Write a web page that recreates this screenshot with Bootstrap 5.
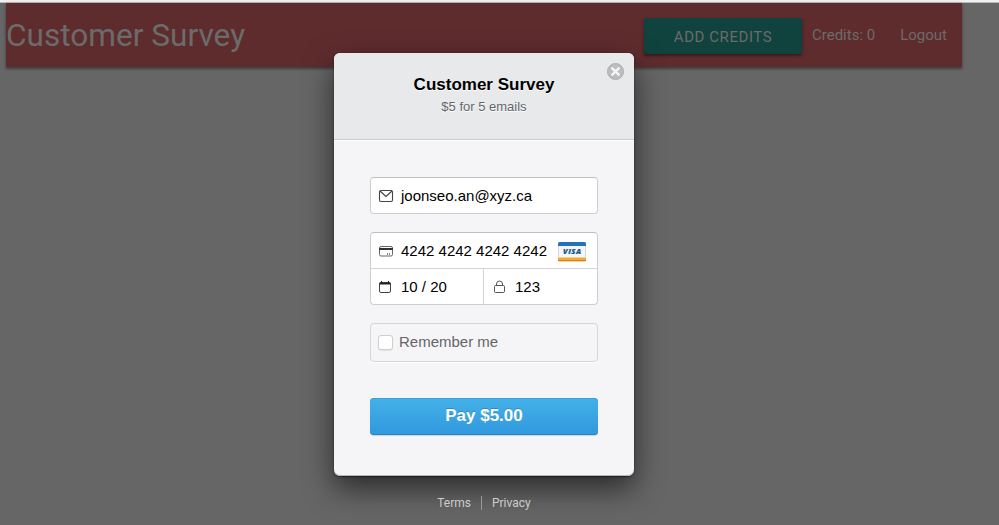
<!DOCTYPE html>
<html lang="en">
<head>
<meta charset="utf-8">
<title>Customer Survey</title>
<link href="https://cdn.jsdelivr.net/npm/bootstrap@5.3.0/dist/css/bootstrap.min.css" rel="stylesheet">
<style>
body{background:#666;height:525px;overflow:hidden;font-family:Roboto,sans-serif;color:#6b6b6b}
.topline{height:3px;background:#f1f1f3;border-bottom:1px solid #b9b9bb}
.appbar{width:956px;height:64px;margin-left:6px;background:#5f2c2e;box-shadow:0 2px 2px rgba(0,0,0,.28),0 1px 4px rgba(0,0,0,.22)}
.brand{font-size:31.6px;line-height:65px;white-space:nowrap}
.add-btn{width:158px;height:36px;margin-top:1px;border-radius:2px;background:#10433e;color:#6b6b6b;font-size:15px;letter-spacing:.56px;box-shadow:0 2px 2px rgba(0,0,0,.28),0 1px 4px rgba(0,0,0,.22);padding:1px 0 0;line-height:36px;border:0}
.links{font-size:15px;white-space:nowrap}
.credits{margin-left:10px}
.logout{margin:0 15px 0 25px}
.overlay{left:0;top:0;width:968px;padding-top:53px;font-family:"Liberation Sans",Arial,sans-serif}
.dialog-box{width:300px;height:423px;border-radius:6px;background:#f5f5f7;box-shadow:inset 0 -1px 0 #b4b4b6,0 12px 30px rgba(0,0,0,.6),0 1px 2px rgba(0,0,0,.5)}
.dialog-head{height:87px;background:#e8e9eb;border-bottom:1px solid #cbccce;border-radius:6px 6px 0 0;box-shadow:0 1px 0 #fff;padding-top:21px}
.dialog-head h1{font-size:17px;line-height:21px;font-weight:700;color:#000;margin:0;text-shadow:0 1px 0 #fff}
.dialog-head p{font-size:13px;line-height:20px;color:#62656a;margin:2px 0 0;text-shadow:0 1px 0 #fff}
.close-x{right:10px;top:10px;width:17px;height:17px}
.dialog-form{padding:37px 36px 0}
.field{background:#fff;border:1px solid #cfcfd2;border-top-color:#c0c0c3;border-radius:4px;color:#000;font-size:15px}
.field svg{width:16px;height:16px;flex:none;margin-top:1px}
.field span{padding-top:2px}
.card-fields{margin-top:18px}
.field svg.visa{width:28px;height:20px;margin-top:2px;margin-left:4px}
.cell{height:35px;padding-left:7px;gap:7px;white-space:nowrap}
.cell-date{width:112px}
.split-top{border-top:1px solid #d4d4d7}
.split-left{border-left:1px solid #d4d4d7;padding-left:8px}
.remember{height:39px;border:1px solid #d4d5d8;border-radius:4px;box-shadow:0 1px 0 #fff;padding-left:7px;gap:6px;font-size:15px;color:#666;margin-top:18px}
.tick{width:15px;height:15px;margin-bottom:1px;background:#fff;border:1px solid #cdced1;border-radius:3px;box-shadow:0 1px 1px rgba(0,0,0,.08)}
.pay{height:37px;margin-top:36px;border:0;border-radius:4px;background:linear-gradient(#44b1e8,#3098de);color:#fff;font-size:17px;font-weight:700;line-height:35px;padding:0 0 2px;text-shadow:0 -1px 0 rgba(0,0,0,.2);box-shadow:inset 0 1px 0 #3ba2d8,inset 0 -1px 0 #2a83c5,0 1px 1px rgba(0,0,0,.15)}
.foot{font-family:Roboto,sans-serif;font-size:12px;line-height:14px;color:#ccc;margin-top:20px}
.foot span+span{border-left:1px solid #999;margin-left:10px;padding-left:10px}
</style>
</head>
<body>
<div class="topline"></div>
<nav class="appbar d-flex justify-content-between">
  <div class="brand">Customer Survey</div>
  <div class="links d-flex align-items-center">
    <button class="btn add-btn">ADD CREDITS</button>
    <span class="credits">Credits: 0</span>
    <span class="logout">Logout</span>
  </div>
</nav>
<div class="overlay position-absolute d-flex flex-column align-items-center">
  <div class="dialog-box">
    <div class="dialog-head text-center position-relative">
      <h1>Customer Survey</h1>
      <p>$5 for 5 emails</p>
      <svg class="close-x position-absolute" viewBox="0 0 17 17"><circle cx="8.5" cy="8.5" r="8" fill="#bcbdbf" stroke="#adaeb0"/><path d="M5.3 5.3l6.400 6.400M11.700 5.300l-6.400 6.400" stroke="#f6f6f7" stroke-width="2.4" stroke-linecap="round"/></svg>
    </div>
    <div class="dialog-form">
      <div class="field">
        <div class="cell d-flex align-items-center">
          <svg viewBox="0 0 16 16" fill="none" stroke="#444"><rect x="1.5" y="2.5" width="13" height="11" rx="1.5" stroke-width="1.1"/><path d="M2 3l6 5.500L14 3" stroke-width="1.200"/></svg>
          <span>joonseo.an@xyz.ca</span>
        </div>
      </div>
      <div class="field card-fields">
        <div class="cell d-flex align-items-center">
          <svg viewBox="0 0 16 16" fill="none" stroke="#666"><rect x="1.5" y="3.5" width="13" height="9.500" rx="1.5"/><path d="M1 6h14" stroke="#333" stroke-width="2"/><path d="M9.5 10v2M11.500 10v2" stroke="#888"/></svg>
          <span>4242 4242 4242 4242</span>
          <svg class="visa" viewBox="0 0 28 20"><rect width="28" height="20" rx="1.5" fill="#f5f6f7"/><path d="M0 4V1.5Q0 0 1.500 0h25Q28 0 28 1.500V4z" fill="#2273b9"/><path d="M0 15.500h28V18q0 1.500-1.500 1.500h-25Q0 19.500 0 18z" fill="#f2a93a"/><path d="M0 18.500h28" stroke="#d98320"/><path d="M.5 4v11.500M27.500 4v11.500" stroke="#d5d9dd"/><text x="14.300" y="12.400" text-anchor="middle" font-family="Open Sans, sans-serif" font-weight="800" font-style="italic" font-size="7.500" letter-spacing=".5" fill="#1c5796" stroke="#1c5796" stroke-width=".2">VISA</text></svg>
        </div>
        <div class="split-top d-flex">
          <div class="cell cell-date d-flex align-items-center">
            <svg viewBox="0 0 16 16" fill="none" stroke="#444"><rect x="1.500" y="3.500" width="11" height="10" rx="1.500"/><path d="M1.500 4.500h11" stroke="#222" stroke-width="2"/><path d="M3.500 2v2M10.500 2v2" stroke="#222"/></svg>
            <span>10 / 20</span>
          </div>
          <div class="cell split-left flex-grow-1 d-flex align-items-center">
            <svg viewBox="0 0 16 16" fill="none" stroke="#555"><rect x="2.500" y="6.500" width="10" height="7" rx="1.200"/><path d="M4.500 6.500V5a3 3 0 0 1 6 0v1.500"/></svg>
            <span>123</span>
          </div>
        </div>
      </div>
      <div class="remember d-flex align-items-center"><span class="tick"></span><span>Remember me</span></div>
      <button class="btn pay w-100 d-block">Pay $5.00</button>
    </div>
  </div>
  <div class="foot d-flex"><span>Terms</span><span>Privacy</span></div>
</div>
<script src="https://cdn.jsdelivr.net/npm/bootstrap@5.3.0/dist/js/bootstrap.bundle.min.js"></script>
</body>
</html>
